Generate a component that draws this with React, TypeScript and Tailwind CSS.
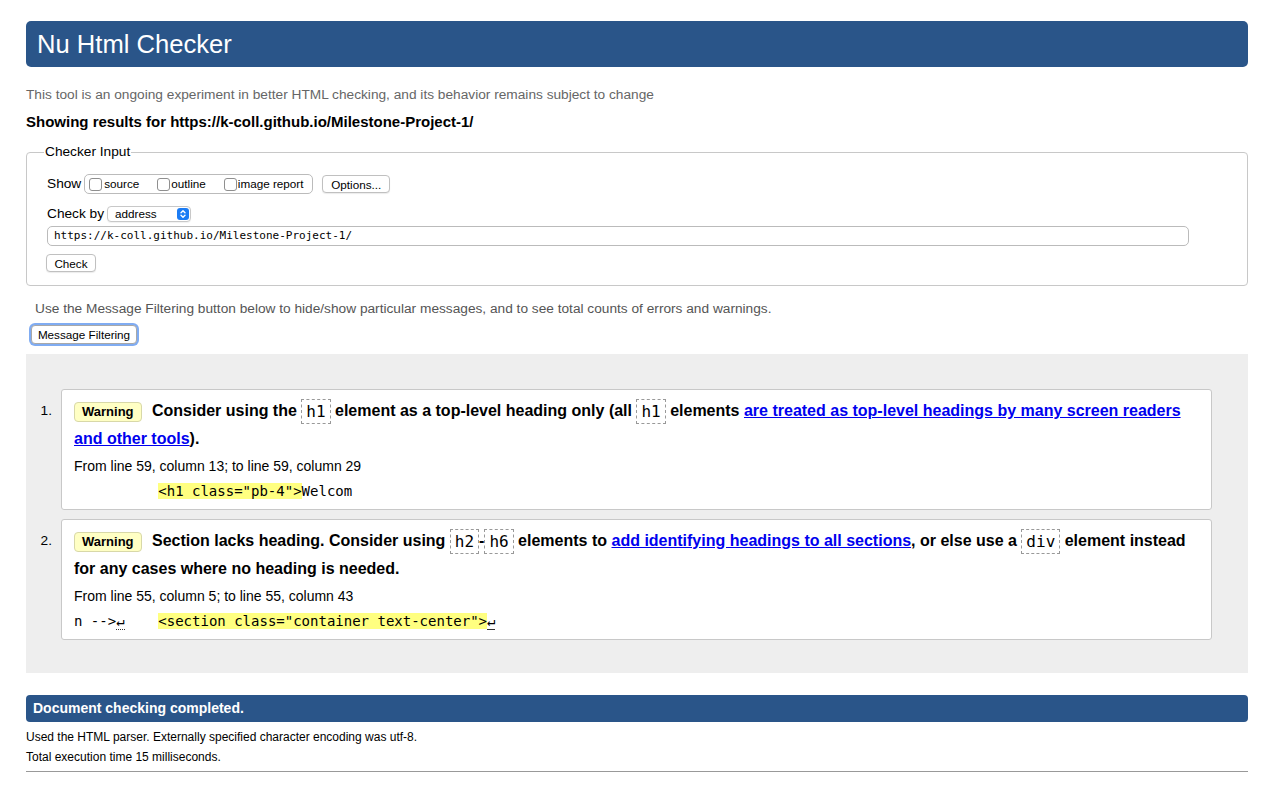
import React from 'react'

const mono = "font-['DejaVu_Sans_Mono',Menlo,monospace]"

function Checkbox() {
  return <span className="inline-block shrink-0 w-[13px] h-[13px] border border-[#8f8f8f] rounded-[3px] bg-white" />
}

function Code({ children }: { children: React.ReactNode }) {
  return (
    <code className={`${mono} inline-block border border-dashed border-[#999] px-[4px] py-[2px] text-[16px] leading-[19px] font-normal align-middle`}>
      {children}
    </code>
  )
}

function Badge() {
  return (
    <span className="inline-block align-middle h-[20px] leading-[18px] px-[7px] mr-[6px] bg-[#ffffc4] border border-[#d8d8a8] rounded-[4px] text-[13px] font-bold">
      Warning
    </span>
  )
}

function Lnk({ children }: { children: React.ReactNode }) {
  return <a className="text-[#0000ee] underline">{children}</a>
}

function Item({ n, children, from, extract }: { n: number; children: React.ReactNode; from: string; extract: React.ReactNode }) {
  return (
    <li className="flex">
      <div className="w-[35px] shrink-0 text-right pr-[9px] text-[13.7px] leading-[28px] pt-[8px]">{n}.</div>
      <div className="flex-1 bg-white border border-[#c8c8c8] rounded-[3px] pt-[7px] pb-[8px] pl-[12px] pr-[11px]">
        <p className="text-[16px] font-bold leading-[28px]">
          <Badge /> {children}
        </p>
        <p className="mt-[4px] text-[14px] leading-[18px]">{from}</p>
        <p className={`${mono} mt-[6px] text-[14px] leading-[20px] whitespace-pre`}>{extract}</p>
      </div>
    </li>
  )
}

export default function App() {
  return (
    <div className="min-h-screen bg-white px-[26px] pt-[21px] pb-[20px] text-black font-['Liberation_Sans',Arial,sans-serif]">
      <h1 className="h-[46px] rounded-[5px] bg-[#2a5589] text-white text-[25.6px] pl-[11px] flex items-center">
        Nu Html Checker
      </h1>

      <p className="mt-[20px] text-[13.7px] leading-[16px] text-[#666]">
        This tool is an ongoing experiment in better HTML checking, and its behavior remains subject to change
      </p>
      <h2 className="mt-[9px] text-[15px] font-bold leading-[20px]">
        Showing results for https://k-coll.github.io/Milestone-Project-1/
      </h2>

      <fieldset className="mt-[12px] border border-[#c8c8c8] rounded-[4px] pl-[20px] pr-[20px] pb-[13px]">
        <legend className="text-[13.7px] leading-[16px] px-[1px] -ml-[3px]">Checker Input</legend>
        <div className="mt-[14px] flex items-center h-[20px]">
          <span className="text-[13.7px]">Show</span>
          <span className="ml-[3px] inline-flex items-center h-[20px] w-[229px] border border-[#bbb] rounded-[5px] pl-[4px] text-[11.7px]">
            <Checkbox />
            <span className="ml-[2px]">source</span>
            <span className="ml-[18px] flex"><Checkbox /></span>
            <span className="ml-[1px]">outline</span>
            <span className="ml-[18px] flex"><Checkbox /></span>
            <span className="ml-[1px]">image report</span>
          </span>
          <button className="ml-[9px] h-[18px] w-[68px] border border-[#c0c0c0] rounded-[4px] bg-white text-[11.7px] shadow-[0_1px_1px_rgba(0,0,0,0.08)]">
            Options...
          </button>
        </div>
        <div className="mt-[10px] flex items-center h-[20px]">
          <span className="text-[13.7px]">Check by</span>
          <span className="ml-[3px] flex items-center justify-between w-[84px] h-[16px] border border-[#c8c8c8] rounded-[4px] bg-white pl-[7px] pr-[1px] text-[11.7px] shadow-[0_1px_1px_rgba(0,0,0,0.06)]">
            address
            <span className="w-[12px] h-[12px] rounded-[3px] bg-[#1c7cf4] flex items-center justify-center">
              <svg width="8" height="10" viewBox="0 0 8 10" fill="none" stroke="white" strokeWidth="1.4" strokeLinecap="round" strokeLinejoin="round">
                <path d="M2 3.8 L4 1.8 L6 3.8" />
                <path d="M2 6.2 L4 8.2 L6 6.2" />
              </svg>
            </span>
          </span>
        </div>
        <div className={`mt-[2px] mr-[38px] h-[20px] border border-[#bbb] rounded-[5px] pl-[6px] flex items-center ${mono} text-[11px]`}>
          https://k-coll.github.io/Milestone-Project-1/
        </div>
        <button className="mt-[8px] -ml-[1px] block h-[18px] w-[50px] border border-[#c0c0c0] rounded-[4px] bg-white text-[11.7px] shadow-[0_1px_1px_rgba(0,0,0,0.08)]">
          Check
        </button>
      </fieldset>

      <p className="mt-[15px] pl-[9px] text-[13.7px] leading-[16px] text-[#555]">
        Use the Message Filtering button below to hide/show particular messages, and to see total counts of errors and warnings.
      </p>
      <button className="mt-[8px] ml-[5px] block h-[19px] w-[106px] border border-[#a8a8a8] rounded-[4px] bg-white text-[11.7px] ring-2 ring-[#80acf2]">
        Message Filtering
      </button>

      <div className="mt-[10px] bg-[#eeeeee] pt-[35px] pb-[33px] pr-[36px]">
        <ol className="flex flex-col gap-[9px]">
          <Item
            n={1}
            from="From line 59, column 13; to line 59, column 29"
            extract={
              <>
                {'          '}
                <span className="bg-[#ffff80]">{'<h1 class="pb-4">'}</span>Welcom
              </>
            }
          >
            Consider using the <Code>h1</Code> element as a top-level heading only (all <Code>h1</Code> elements{' '}
            <Lnk>are treated as top-level headings by many screen readers and other tools</Lnk>).
          </Item>
          <Item
            n={2}
            from="From line 55, column 5; to line 55, column 43"
            extract={
              <>
                {'n -->'}
                <span className="border-b border-dotted border-[#333]">↵</span>
                {'    '}
                <span className="bg-[#ffff80]">{'<section class="container text-center">'}</span>
                <span className="border-b border-[#333]">↵</span>
              </>
            }
          >
            Section lacks heading. Consider using <Code>h2</Code>-<Code>h6</Code> elements to{' '}
            <Lnk>add identifying headings to all sections</Lnk>, or else use a <Code>div</Code> element instead for any
            cases where no heading is needed.
          </Item>
        </ol>
      </div>

      <div className="mt-[22px] h-[27px] rounded-[4px] bg-[#2a5589] text-white text-[14px] font-bold pl-[7px] flex items-center">
        Document checking completed.
      </div>
      <p className="mt-[5px] text-[12px] leading-[20px]">
        Used the HTML parser. Externally specified character encoding was utf-8.
      </p>
      <p className="text-[12px] leading-[20px]">Total execution time 15 milliseconds.</p>
      <hr className="mt-[4px] border-t border-[#999]" />
    </div>
  )
}
